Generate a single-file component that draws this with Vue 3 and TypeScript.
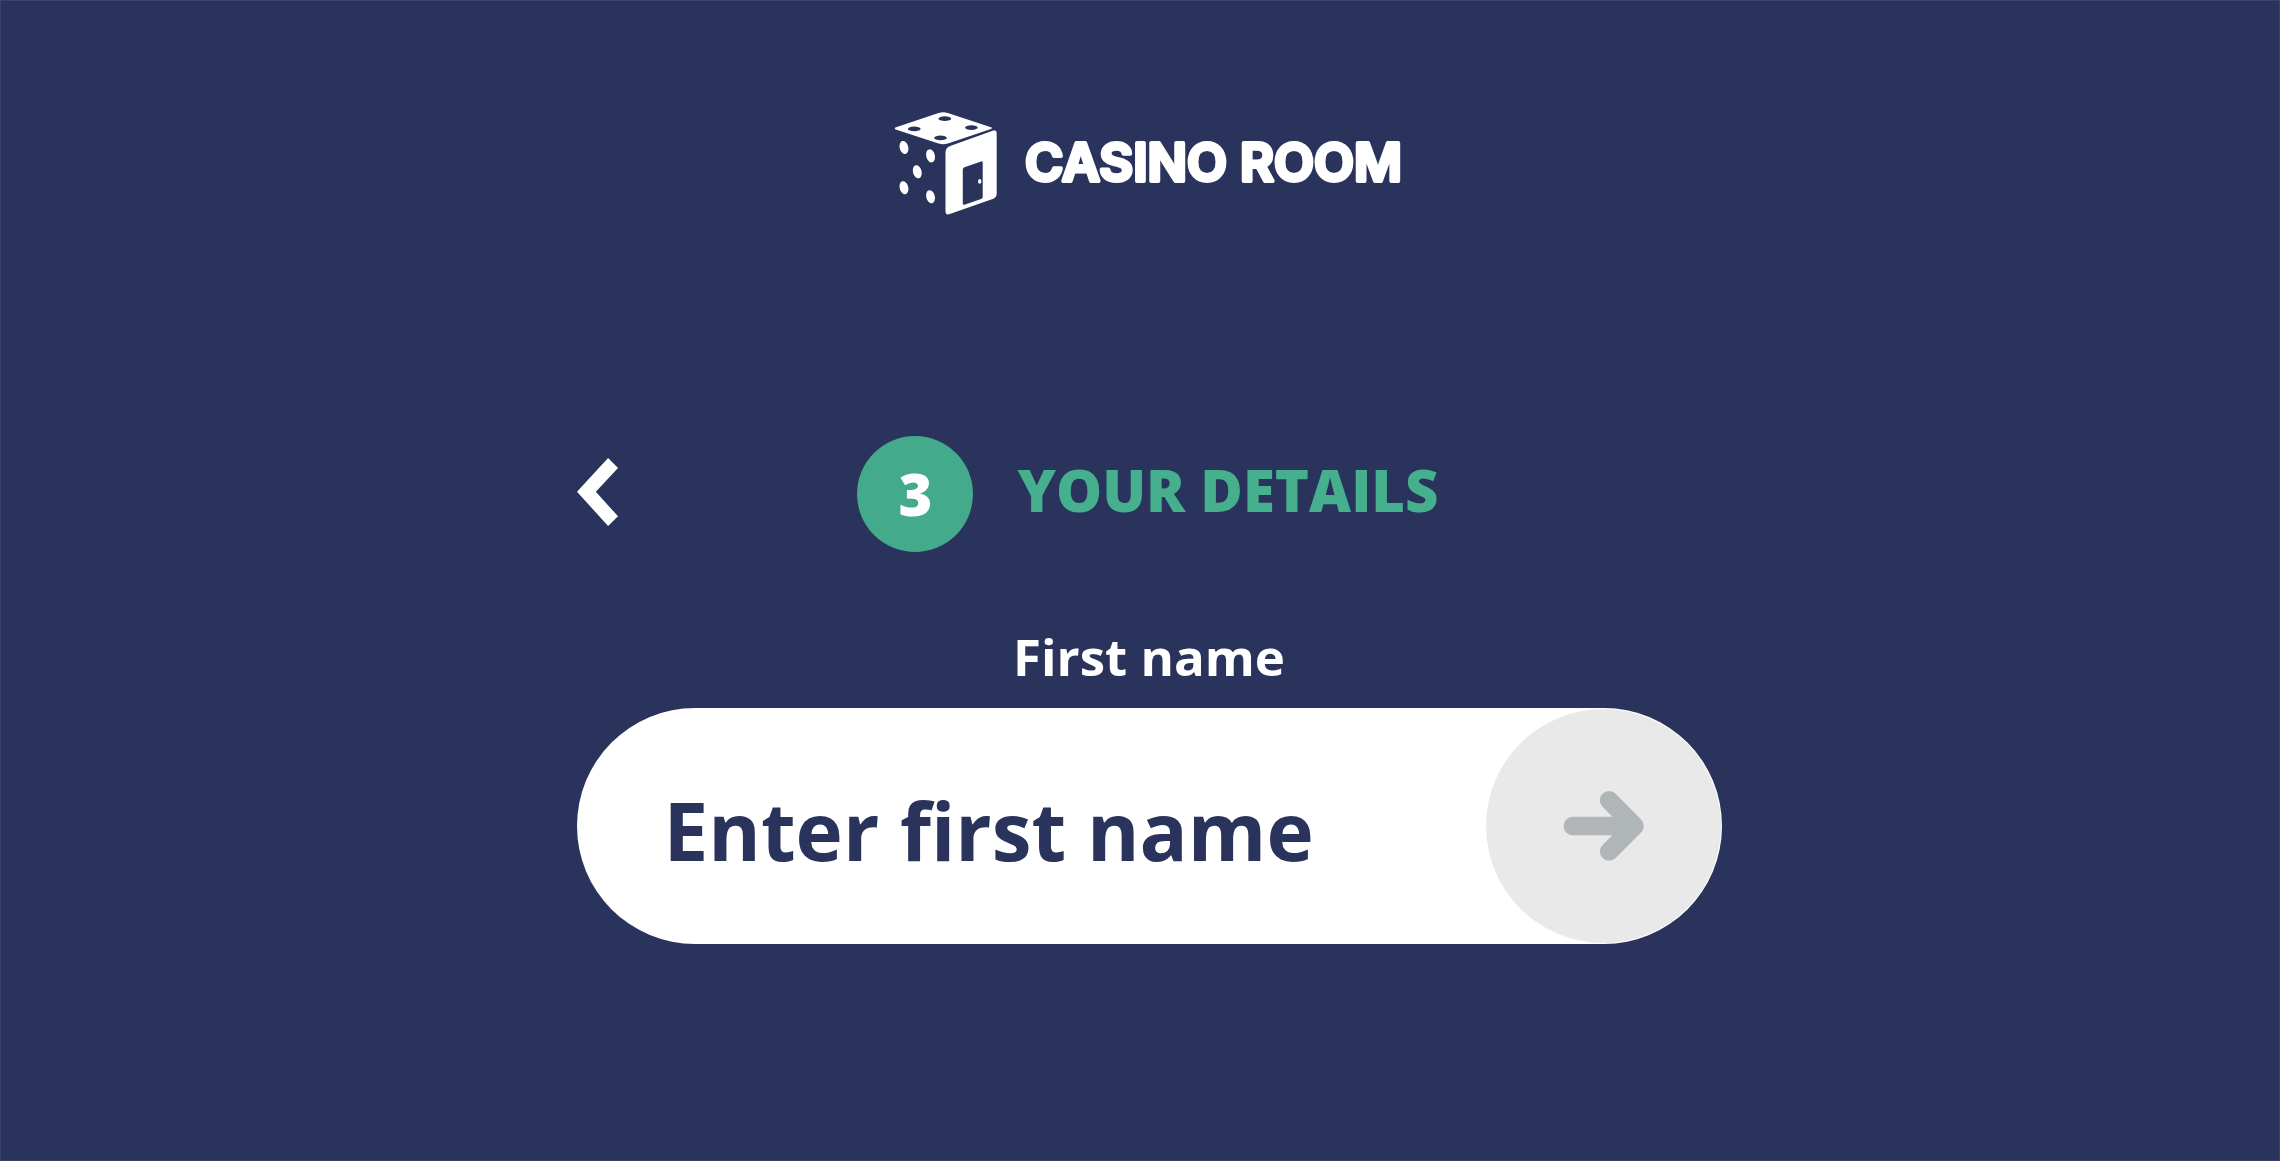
<script setup lang="ts">
import { ref } from 'vue'

const step = 3
const firstName = ref('')
</script>

<template>
  <main class="page">
    <div class="column">
      <header class="brand">
        <svg class="dice" viewBox="42 36 310 310" aria-hidden="true">
          <path
            fill="#fff"
            fill-rule="evenodd"
            d="M46 83 Q42 86 47 89 L176 131 Q190 135 204 131 L334 87 Q339 84 334 82 L204 39 Q190 35 176 39 Z
               M176 56a19 7 0 1 0 38 0a19 7 0 1 0-38 0Z
               M84 87a19 7 0 1 0 38 0a19 7 0 1 0-38 0Z
               M256 83a19 7 0 1 0 38 0a19 7 0 1 0-38 0Z
               M163 114a19 7 0 1 0 38 0a19 7 0 1 0-38 0Z"
          />
          <path
            fill="#fff"
            fill-rule="evenodd"
            d="M211 138 L341 92 Q351 89 351 100 V283 Q351 293 341 297 L210 343 Q197 348 197 335 V158 Q197 143 211 138 Z
               M254 202 Q249 204 249 209 V311 Q249 317 254 315 L304 298 Q309 296 309 291 V189 Q309 183 304 185 Z"
          />
          <ellipse cx="300" cy="245" rx="5" ry="7" fill="#fff" />
          <g fill="#fff">
            <ellipse cx="72" cy="143" rx="13" ry="20" transform="rotate(-14 72 143)" />
            <ellipse cx="152" cy="168" rx="13" ry="20" transform="rotate(-14 152 168)" />
            <ellipse cx="112" cy="216" rx="13" ry="20" transform="rotate(-14 112 216)" />
            <ellipse cx="72" cy="264" rx="13" ry="20" transform="rotate(-14 72 264)" />
            <ellipse cx="152" cy="291" rx="13" ry="20" transform="rotate(-14 152 291)" />
          </g>
        </svg>
        <svg class="wordmark" viewBox="0 0 384 60">
          <text x="4" y="47">CASINO ROOM</text>
        </svg>
      </header>

      <div class="step-row">
        <button class="back" type="button" aria-label="Back">
          <svg viewBox="50 86 124 205" aria-hidden="true">
            <path fill="#fff" d="M50 188 L144 86 L174 116 L107 188 L174 262 L144 291 Z" />
          </svg>
        </button>
        <div class="step">
          <span class="number">{{ step }}</span>
          <h1 class="title">YOUR DETAILS</h1>
        </div>
      </div>

      <form class="form" @submit.prevent>
        <label class="label" for="first-name">First name</label>
        <div class="field">
          <input
            id="first-name"
            v-model="firstName"
            class="input"
            type="text"
            placeholder="Enter first name"
          />
          <button class="next" type="submit" aria-label="Next">
            <svg viewBox="310 301 244 218" aria-hidden="true">
              <g fill="none" stroke="#b0b5b8" stroke-width="56" stroke-linecap="round" stroke-linejoin="round">
                <path d="M339 410 H520" />
                <path d="M449 332 L526 410 L449 487" />
              </g>
            </svg>
          </button>
        </div>
      </form>
    </div>
  </main>
</template>

<style>
body {
  margin: 0;
  background: #2a335c;
}
</style>

<style scoped>
.page {
  box-sizing: border-box;
  min-height: 100vh;
  padding: 111px 24px 48px 42px;
  border: 1px solid #3b446b;
  background: #2a335c;
  color: #fff;
  font-family: "Open Sans", "Noto Sans", sans-serif;
}

.column {
  max-width: 1145px;
  margin: 0 auto;
}

.brand {
  display: flex;
  justify-content: center;
  align-items: center;
  gap: 24px;
}

.dice {
  width: 103px;
  height: 103px;
}

.wordmark {
  width: 384px;
  height: 60px;
  overflow: visible;
}

.wordmark text {
  fill: #fff;
  stroke: #fff;
  stroke-width: 4px;
  stroke-linejoin: round;
  font-family: Inter, "Open Sans", sans-serif;
  font-size: 52px;
  font-weight: 600;
}

.step-row {
  display: grid;
  grid-template-columns: 1fr auto 1fr;
  align-items: center;
  margin-top: 221px;
}

.back {
  justify-self: start;
  padding: 0 0 4px;
  border: 0;
  background: none;
  cursor: pointer;
}

.back svg {
  display: block;
  width: 41px;
  height: 68px;
}

.step {
  display: flex;
  align-items: center;
  gap: 44px;
  padding-right: 2px;
}

.number {
  display: grid;
  place-items: center;
  width: 116px;
  height: 116px;
  border-radius: 50%;
  background: #44aa8c;
  font-size: 58px;
  font-weight: 800;
  line-height: 80px;
}

.title {
  margin: 0;
  padding-bottom: 8px;
  color: #45af8e;
  font-size: 58px;
  font-weight: 800;
  line-height: 80px;
  white-space: nowrap;
}

.form {
  margin-top: 70px;
}

.label {
  display: block;
  margin-bottom: 18px;
  font-size: 51px;
  font-weight: 700;
  line-height: 68px;
  text-align: center;
}

.field {
  display: flex;
  align-items: center;
  box-sizing: border-box;
  height: 236px;
  padding: 1px;
  border-radius: 118px;
  background: #fff;
}

.input {
  flex: 1;
  min-width: 0;
  height: 100%;
  box-sizing: border-box;
  padding: 6px 0 0 86px;
  border: 0;
  outline: 0;
  background: none;
  color: #2a335c;
  font-family: inherit;
  font-size: 80px;
  font-weight: 700;
}

.input::placeholder {
  color: #2a335c;
  opacity: 1;
}

.next {
  display: grid;
  place-items: center;
  width: 235px;
  height: 234px;
  padding: 0;
  border: 0;
  border-radius: 50%;
  background: #e9e9e9;
  cursor: pointer;
}

.next svg {
  width: 81px;
  height: 72px;
}
</style>
